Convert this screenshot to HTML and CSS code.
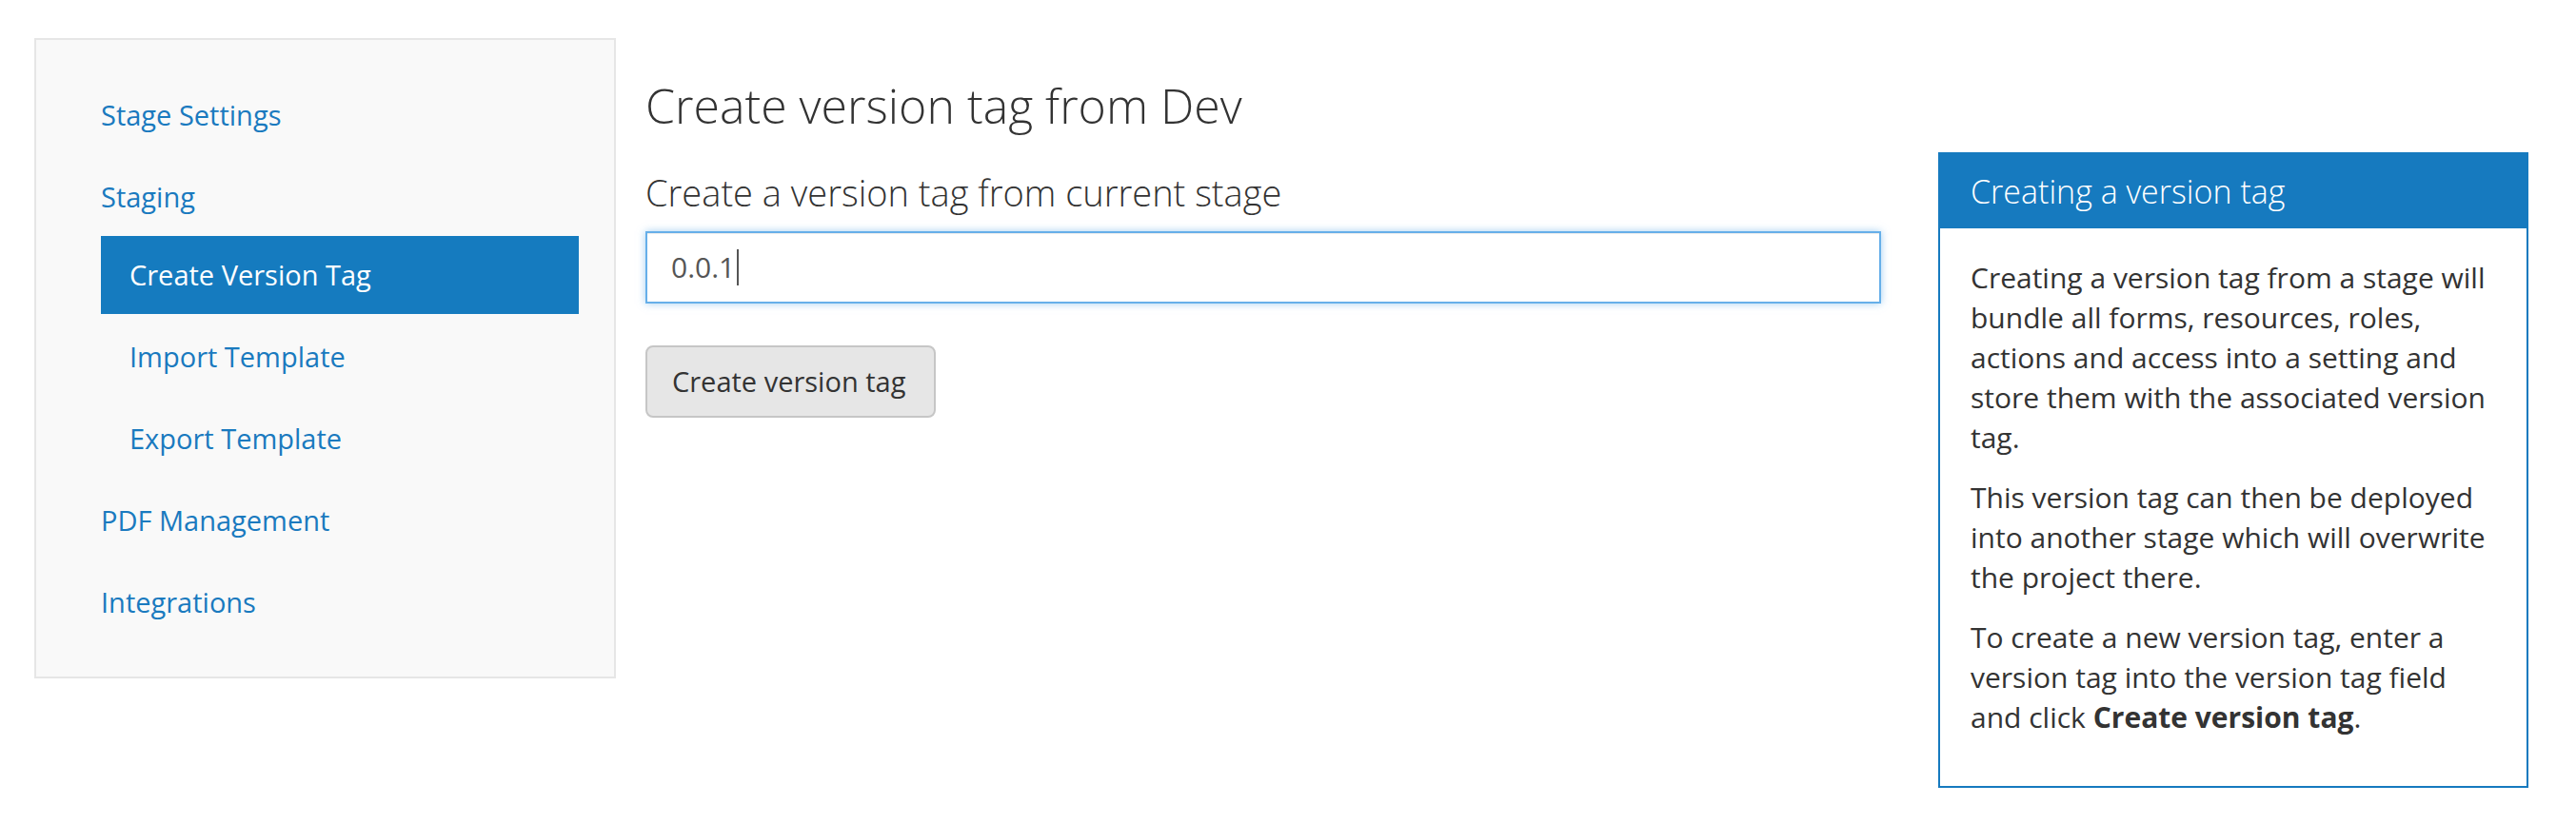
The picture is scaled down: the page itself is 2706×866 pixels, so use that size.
FILE: index.html
```html
<!DOCTYPE html>
<html lang="en">
<head>
<meta charset="utf-8">
<title>Create version tag</title>
<link rel="stylesheet" href="styles.css">
</head>
<body>
<div class="page">
  <aside class="sidebar">
    <ul class="nav">
      <li><a href="#">Stage Settings</a></li>
      <li><a href="#">Staging</a>
        <ul class="nav sub">
          <li class="active"><a href="#">Create Version Tag</a></li>
          <li><a href="#">Import Template</a></li>
          <li><a href="#">Export Template</a></li>
        </ul>
      </li>
      <li><a href="#">PDF Management</a></li>
      <li><a href="#">Integrations</a></li>
    </ul>
  </aside>
  <main class="main">
    <h1 class="title">Create version tag from Dev</h1>
    <h2 class="subtitle">Create a version tag from current stage</h2>
    <div class="input" role="textbox">0.0.1<span class="caret"></span></div>
    <button class="btn" type="button">Create version tag</button>
  </main>
  <section class="panel">
    <div class="panel-heading">Creating a version tag</div>
    <div class="panel-body">
      <p>Creating a version tag from a stage will bundle all forms, resources, roles, actions and access into a setting and store them with the associated version tag.</p>
      <p>This version tag can then be deployed into another stage which will overwrite the project there.</p>
      <p>To create a new version tag, enter a version tag into the version tag field and click <strong>Create version tag</strong>.</p>
    </div>
  </section>
</div>
</body>
</html>
```

FILE: styles.css
```css
* { box-sizing: border-box; }
html, body { margin: 0; padding: 0; background: #fff; }
body {
  font-family: "Open Sans", "Noto Sans", sans-serif;
  font-size: 30px;
  line-height: 42px;
  color: #333;
}
.page {
  display: flex;
  align-items: flex-start;
  padding: 40px 50px 0 36px;
}
.sidebar {
  flex: 0 0 611px;
  background: #f9f9f9;
  border: 2px solid #e6e6e6;
  padding: 38px 37px 37px 68px;
}
.nav {
  list-style: none;
  margin: 0;
  padding: 0;
}
.nav li + li { margin-top: 4px; }
.nav a {
  display: block;
  padding: 20px 0;
  font-size: 29px;
  color: #1a7abf;
  text-decoration: none;
}
.nav.sub a { padding-left: 30px; }
.nav li.active > a {
  background: #157bbf;
  color: #fff;
}
.main {
  flex: 0 0 1298px;
  margin-left: 31px;
}
.title {
  margin: 43px 0 0;
  font-size: 50px;
  line-height: 56px;
  font-weight: 300;
  color: #333;
}
.subtitle {
  margin: 42px 0 0;
  font-size: 38px;
  line-height: 42px;
  font-weight: 300;
  color: #333;
}
.input {
  margin-top: 20px;
  height: 76px;
  border: 2px solid #66afe9;
  padding: 0 25px;
  display: flex;
  align-items: center;
  color: #555;
  background: #fff;
  box-shadow: inset 0 1px 1px rgba(0,0,0,.075), 0 0 8px rgba(102,175,233,.6);
}
.caret {
  display: inline-block;
  width: 2px;
  height: 38px;
  background: #555;
  margin-left: 2px;
}
.btn {
  display: block;
  margin-top: 44px;
  height: 76px;
  width: 305px;
  padding: 0 26px;
  text-align: left;
  font-family: inherit;
  font-size: 29px;
  line-height: 42px;
  color: #333;
  background: #e6e6e6;
  border: 2px solid #c6c6c6;
  border-radius: 8px;
}
.panel {
  flex: 0 0 620px;
  margin-left: 60px;
  margin-top: 120px;
  border: 2px solid #167abf;
  background: #fff;
  box-shadow: 0 2px 3px rgba(0,0,0,.05);
}
.panel-heading {
  background: #167abf;
  color: #fff;
  height: 78px;
  padding: 0 32px;
  display: flex;
  align-items: center;
  font-size: 34px;
  font-weight: 300;
}
.panel-body {
  padding: 31px 32px 30px;
}
.panel-body p { margin: 0 0 21px; }
.panel-body strong { font-weight: 700; }
```
